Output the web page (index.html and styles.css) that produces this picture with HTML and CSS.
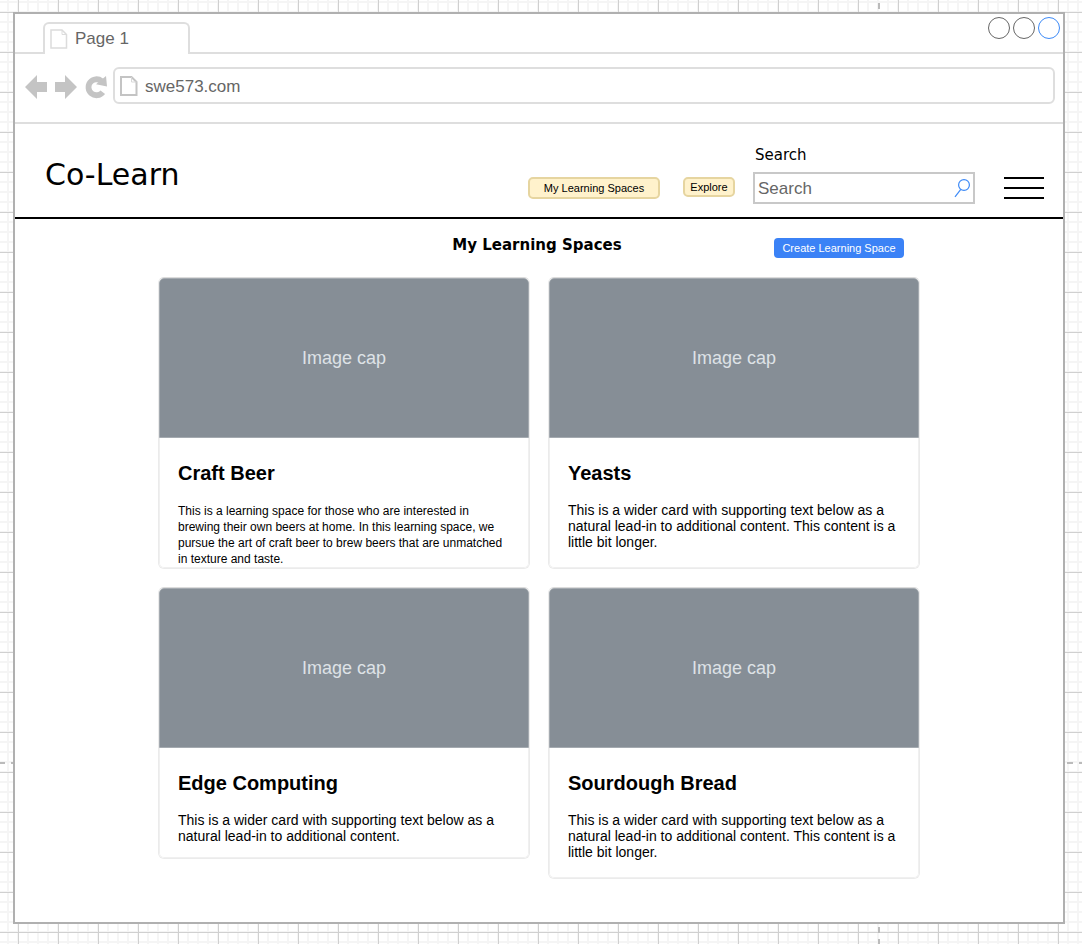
FILE: index.html
```
<!DOCTYPE html>
<html lang="en">
<head>
<meta charset="utf-8">
<meta name="viewport" content="width=device-width, initial-scale=1">
<title>Co-Learn</title>
<link rel="stylesheet" href="styles.css">
</head>
<body>
<div class="window">
  <div class="tab-strip">
    <div class="tab-lead"></div>
    <div class="tab">
      <svg class="tab-icon" width="18" height="20" viewBox="0 0 18 20" fill="none" stroke="#dcdcdc" stroke-width="1.5"><path d="M1 1H12L16.500 5.500V19H1Z"/><path d="M12 1V5.500H16.500" stroke-width="1"/></svg>
      <span>Page 1</span>
    </div>
    <div class="window-controls">
      <button class="control" aria-label="Minimize"></button>
      <button class="control" aria-label="Maximize"></button>
      <button class="control control-close" aria-label="Close"></button>
    </div>
  </div>
  <div class="toolbar">
    <div class="history">
      <button class="icon-button" aria-label="Back"><svg width="22" height="24" viewBox="0 0 22 24" fill="#c4c4c4"><path d="M0 12L12 0V7H22V17H12V24Z"/></svg></button>
      <button class="icon-button" aria-label="Forward"><svg width="22" height="24" viewBox="0 0 22 24" fill="#c4c4c4"><path d="M22 12L10 0V7H0V17H10V24Z"/></svg></button>
      <button class="icon-button" aria-label="Reload"><svg width="22" height="24" viewBox="0 0 22 24"><path d="M17.800 17.200A8 8 0 1 1 16.500 6" fill="none" stroke="#c4c4c4" stroke-width="5.800"/><path d="M21 1L22 11.500L11 9.300Z" fill="#c4c4c4"/></svg></button>
    </div>
    <div class="address">
      <svg width="18" height="20" viewBox="0 0 18 20" fill="none" stroke="#c4c4c4" stroke-width="2"><path d="M1 1H11.500L16.500 6V19H1Z"/><path d="M11.500 1V6H16.500" stroke="#d8d8d8" stroke-width="1"/></svg>
      <input class="address-input" type="text" value="swe573.com" aria-label="Address">
    </div>
  </div>

  <header class="site-header">
    <h1 class="logo">Co-Learn</h1>
    <nav class="nav">
      <button class="pill pill-wide">My Learning Spaces</button>
      <button class="pill pill-small">Explore</button>
    </nav>
    <div class="search">
      <label class="search-label" for="search">Search</label>
      <div class="search-box">
        <input class="search-input" id="search" type="text" placeholder="Search">
        <svg width="18" height="20" viewBox="0 0 18 20" fill="none" stroke="#3d8af7" stroke-width="1.200"><circle cx="11" cy="7" r="5.400"/><path d="M7.800 11.400L2 18.800"/></svg>
      </div>
    </div>
    <button class="menu" aria-label="Menu"><span class="bar"></span><span class="bar"></span><span class="bar"></span></button>
  </header>

  <main class="content">
    <div class="section-head">
      <h2 class="section-title">My Learning Spaces</h2>
      <button class="create">Create Learning Space</button>
    </div>
    <div class="cards">
      <article class="card">
        <div class="card-image">Image cap</div>
        <div class="card-body card-body-dense">
          <h3 class="card-title">Craft Beer</h3>
          <p class="card-text">This is a learning space for those who are interested in brewing their own beers at home. In this learning space, we pursue the art of craft beer to brew beers that are unmatched in texture and taste.</p>
        </div>
      </article>
      <article class="card">
        <div class="card-image">Image cap</div>
        <div class="card-body">
          <h3 class="card-title">Yeasts</h3>
          <p class="card-text">This is a wider card with supporting text below as a natural lead-in to additional content. This content is a little bit longer.</p>
        </div>
      </article>
      <article class="card">
        <div class="card-image">Image cap</div>
        <div class="card-body card-body-short">
          <h3 class="card-title">Edge Computing</h3>
          <p class="card-text">This is a wider card with supporting text below as a natural lead-in to additional content.</p>
        </div>
      </article>
      <article class="card">
        <div class="card-image">Image cap</div>
        <div class="card-body">
          <h3 class="card-title">Sourdough Bread</h3>
          <p class="card-text">This is a wider card with supporting text below as a natural lead-in to additional content. This content is a little bit longer.</p>
        </div>
      </article>
    </div>
  </main>
</div>
</body>
</html>
```

FILE: styles.css
```
* {
  box-sizing: border-box;
}

/* Canvas: dashed page breaks over a 40px grid with 10px subdivisions */
body {
  margin: 0;
  min-height: 100vh;
  padding: 12px 17px 20px 13px;
  display: flex;
  flex-direction: column;
  font-family: "Liberation Sans", Arial, sans-serif;
  color: #000;
  background-color: #fff;
  background-image:
    linear-gradient(#bbb 6px, transparent 6px),
    linear-gradient(90deg, #bbb 6px, transparent 6px),
    linear-gradient(90deg, #d0d0d0 1px, transparent 1px),
    linear-gradient(#d0d0d0 1px, transparent 1px),
    linear-gradient(90deg, #f5f5f5 2px, transparent 2px),
    linear-gradient(#f5f5f5 2px, transparent 2px);
  background-size: 2px 12px, 12px 2px, 40px 40px, 40px 40px, 10px 10px, 10px 10px;
  background-position: 878px 3px, 11px 762px, 18px 0, 0 12px, 7px 0, 0 1px;
  background-repeat: repeat-y, repeat-x, repeat, repeat, repeat, repeat;
}

h1, h2, h3, p {
  margin: 0;
}

button {
  margin: 0;
  padding: 0;
  border: 0;
  background: none;
  font-family: inherit;
  color: inherit;
}

svg {
  display: block;
  flex: none;
}

.window {
  flex: 1;
  background: #fff;
  border: 2px solid #b0b0b0;
}

/* Browser chrome */
.tab-strip {
  display: flex;
  height: 40px;
}

.tab-lead {
  width: 28px;
  border-bottom: 2px solid #dedede;
}

.tab {
  display: flex;
  align-items: center;
  gap: 7px;
  width: 147px;
  margin-top: 8px;
  padding: 0 5px;
  border: 2px solid #dedede;
  border-bottom: 0;
  border-radius: 6px 6px 0 0;
  font-size: 17px;
  color: #666;
}

.window-controls {
  flex: 1;
  display: flex;
  justify-content: flex-end;
  gap: 3px;
  padding: 3px 3px 0 0;
  border-bottom: 2px solid #dedede;
}

.control {
  width: 22px;
  height: 22px;
  border: 1px solid #666;
  border-radius: 50%;
}

.control-close {
  border-color: #3d8af7;
}

.toolbar {
  display: flex;
  align-items: center;
  gap: 6px;
  padding: 13px 8px 18px 10px;
  border-bottom: 2px solid #dedede;
}

.history {
  display: flex;
  gap: 8px;
  padding-top: 3px;
}

.address {
  flex: 1;
  display: flex;
  align-items: center;
  gap: 7px;
  height: 37px;
  padding: 0 5px;
  border: 2px solid #dedede;
  border-radius: 6px;
}

.address-input {
  flex: 1;
  min-width: 0;
  padding: 2px 0 0;
  border: 0;
  outline: 0;
  background: none;
  font: 17px "Liberation Sans", Arial, sans-serif;
  color: #666;
}

/* Site header */
.site-header {
  display: flex;
  align-items: flex-end;
  padding: 22px 19px 13px 30px;
  border-bottom: 2px solid #000;
}

.logo {
  margin-right: auto;
  padding-bottom: 11px;
  font: 30px/36px "DejaVu Sans", Verdana, sans-serif;
}

.nav {
  display: flex;
  align-items: flex-start;
  gap: 23px;
  margin: 0 18px 5px 0;
}

.pill {
  border: 2px solid #e6d5a0;
  border-radius: 5px;
  background: #fff2cc;
  font-size: 11px;
}

.pill-wide {
  width: 132px;
  height: 22px;
}

.pill-small {
  width: 52px;
  height: 20px;
}

.search {
  width: 222px;
  margin-right: 29px;
}

.search-label {
  display: block;
  padding-left: 2px;
  margin-bottom: 8px;
  font: 15px/18px "DejaVu Sans", Verdana, sans-serif;
}

.search-box {
  display: flex;
  align-items: center;
  height: 32px;
  padding: 0 2px 0 3px;
  border: 2px solid #c8c8c8;
}

.search-input {
  flex: 1;
  min-width: 0;
  padding: 2px 0 0;
  border: 0;
  outline: 0;
  background: none;
  font: 17px "Liberation Sans", Arial, sans-serif;
}

.search-input::placeholder {
  color: #666;
  opacity: 1;
}

.menu {
  display: flex;
  flex-direction: column;
  gap: 8px;
  width: 40px;
  margin-bottom: 5px;
}

.bar {
  width: 100%;
  height: 2px;
  background: #000;
}

/* Learning spaces */
.content {
  max-width: 762px;
  margin: 0 auto;
  padding-bottom: 43px;
}

.section-head {
  display: grid;
  grid-template-columns: 1fr auto 1fr;
  align-items: start;
  padding: 16px 0 19px;
}

.section-title {
  grid-column: 2;
  padding-right: 4px;
  font: bold 15px/20px "DejaVu Sans", Verdana, sans-serif;
}

.create {
  justify-self: end;
  width: 130px;
  height: 20px;
  margin: 3px 16px 0 0;
  border-radius: 4px;
  background: #3b82f6;
  color: #fff;
  font-size: 11px;
}

.cards {
  display: grid;
  grid-template-columns: 1fr 1fr;
  align-items: start;
  gap: 18px;
}

.card {
  border: 1px solid #ebebeb;
  border-top-color: #dcdcdc;
  border-radius: 6px;
  overflow: hidden;
}

.card-image {
  display: flex;
  align-items: center;
  justify-content: center;
  height: 160px;
  border: 1px solid #a4aab0;
  border-radius: 5px 5px 0 0;
  background: #868e96;
  color: #dee2e6;
  font-size: 18px;
}

.card-body {
  padding: 23px 16px 17px 18px;
  border: 1px solid #f0f0f0;
  border-top: 0;
  border-radius: 0 0 5px 5px;
}

.card-title {
  margin-bottom: 17px;
  font-size: 20px;
  line-height: 24px;
}

.card-text {
  font-size: 14px;
  line-height: 16px;
}

.card-body-dense {
  padding-bottom: 0;
}

.card-body-dense .card-title {
  margin-bottom: 18px;
}

.card-body-dense .card-text {
  font-size: 12px;
}

.card-body-short {
  padding-bottom: 13px;
}
```
